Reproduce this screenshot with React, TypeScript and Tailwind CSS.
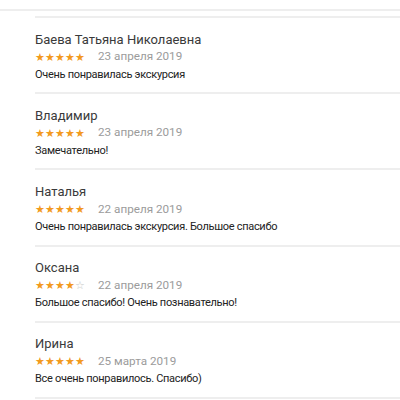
import React from "react";

type Review = { name: string; stars: number; date: string; text: string };

const reviews: Review[] = [
  { name: "Баева Татьяна Николаевна", stars: 5, date: "23 апреля 2019", text: "Очень понравилась экскурсия" },
  { name: "Владимир", stars: 5, date: "23 апреля 2019", text: "Замечательно!" },
  { name: "Наталья", stars: 5, date: "22 апреля 2019", text: "Очень понравилась экскурсия. Большое спасибо" },
  { name: "Оксана", stars: 4, date: "22 апреля 2019", text: "Большое спасибо! Очень познавательно!" },
  { name: "Ирина", stars: 5, date: "25 марта 2019", text: "Все очень понравилось. Спасибо)" },
];

function Stars({ n }: { n: number }) {
  return (
    <div className="flex w-[52px] text-[11px] leading-none">
      {[0, 1, 2, 3, 4].map((i) =>
        i < n ? (
          <span key={i} className="w-[10px] text-[#f29a1f]">★</span>
        ) : (
          <span key={i} className="w-[10px] text-[#c8c8c8]">☆</span>
        )
      )}
    </div>
  );
}

export default function App() {
  return (
    <div className="w-[400px] h-[400px] overflow-hidden bg-white" style={{ fontFamily: "Roboto, 'Noto Sans', sans-serif" }}>
      <div className="h-[9px]" />
      <div className="h-[2px] bg-[#eeeeee]" />
      <div className="pl-[35px]">
        <div className="h-[5px]" />
        <div className="h-[2px] bg-[#eeeeee]" />
        {reviews.map((r, idx) => (
          <div key={idx} className="h-[76.2px] flex flex-col border-b-2 border-[#eeeeee]">
            <div className="pt-[12.5px] text-[13px] leading-[17px] text-[#3a3a3a]">{r.name}</div>
            <div className="mt-[1px] flex items-center h-[17px]">
              <Stars n={r.stars} />
              <span className="ml-[11px] text-[11.7px] text-[#9b9b9b]">{r.date}</span>
            </div>
            <div className="mt-[1px] text-[11px] tracking-[-0.3px] leading-[15px] text-[#222]">{r.text}</div>
          </div>
        ))}
      </div>
    </div>
  );
}
